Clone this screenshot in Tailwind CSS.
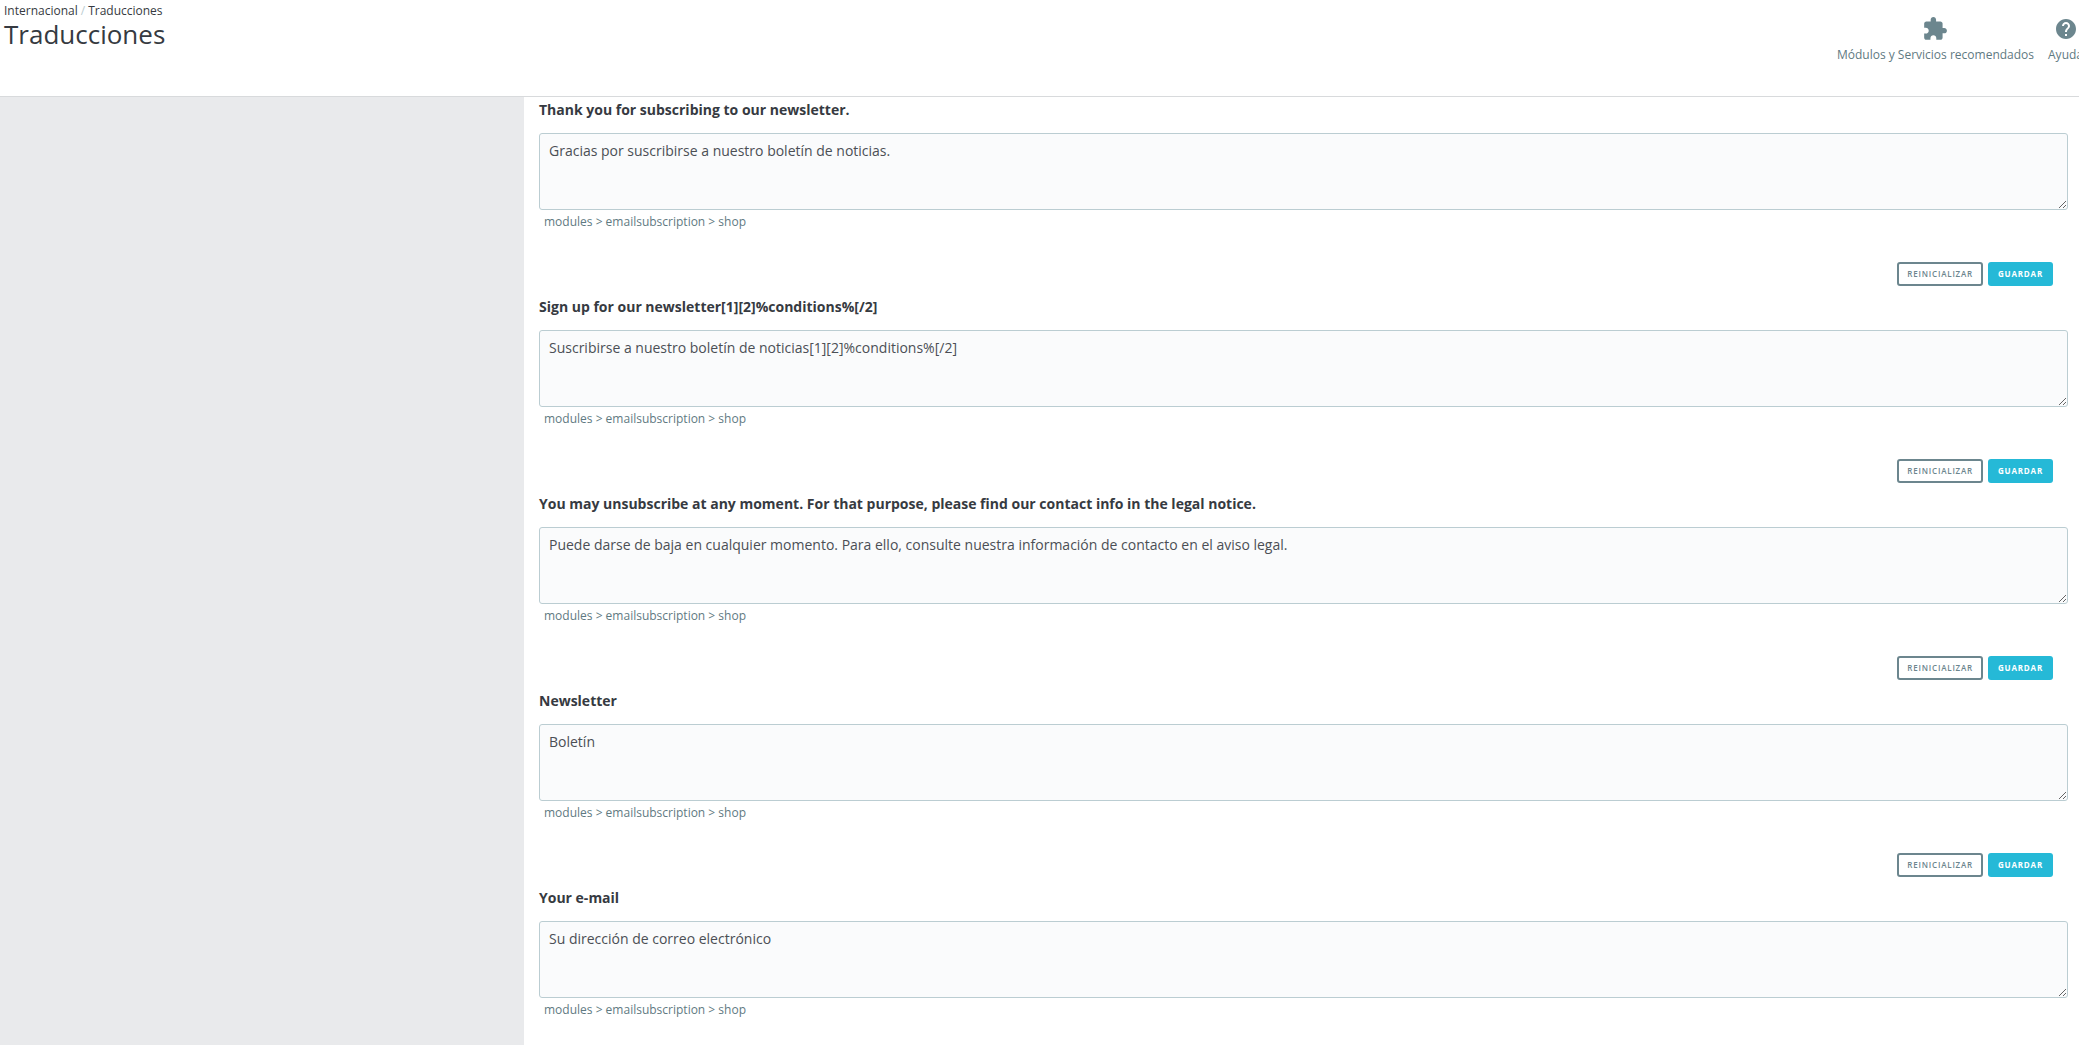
<!DOCTYPE html>
<html lang="es">
<head>
  <meta charset="UTF-8" />
  <meta name="viewport" content="width=device-width, initial-scale=1.0" />
  <title>Traducciones</title>
  <script src="https://cdn.jsdelivr.net/npm/@tailwindcss/browser@4"></script>
</head>
<body class="h-screen flex flex-col overflow-hidden bg-white text-[#363a41] font-['Open_Sans','Noto_Sans',sans-serif]">

  <!-- Cabecera -->
  <header class="h-[97px] shrink-0 flex justify-between border-b border-[#d8dadc]">
    <div class="pl-1 pt-[3px]">
      <nav aria-label="Ruta" class="flex gap-[3px] text-xs leading-4">
        <a href="#">Internacional</a>
        <span class="text-[#bbcdd2]">/</span>
        <a href="#">Traducciones</a>
      </nav>
      <h1 class="text-[26px] leading-[30px]">Traducciones</h1>
    </div>
    <div class="flex gap-[14px] pt-4 -mr-1 text-xs leading-4 text-[#5f7a82]">
      <a href="#" class="flex flex-col items-center gap-[5px]">
        <svg class="size-[26px] text-[#6c868e]" viewBox="0 0 24 24" fill="currentColor" aria-hidden="true"><path d="M20.500 11H19V7c0-1.100-.9-2-2-2h-4V3.500C13 2.120 11.880 1 10.500 1S8 2.120 8 3.500V5H4c-1.100 0-1.990.9-1.990 2v3.800H3.500c1.490 0 2.700 1.210 2.700 2.700s-1.210 2.700-2.700 2.700H2V20c0 1.100.9 2 2 2h3.800v-1.500c0-1.490 1.210-2.700 2.700-2.700 1.490 0 2.700 1.210 2.700 2.700V22H17c1.100 0 2-.9 2-2v-4h1.500c1.380 0 2.500-1.120 2.500-2.500S21.880 11 20.500 11z"/></svg>
        Módulos y Servicios recomendados
      </a>
      <a href="#" class="flex flex-col items-center gap-[5px]">
        <svg class="size-6 my-px text-[#6c868e]" viewBox="0 0 24 24" fill="currentColor" aria-hidden="true"><path d="M12 2C6.480 2 2 6.480 2 12s4.480 10 10 10 10-4.480 10-10S17.520 2 12 2zm1 17h-2v-2h2v2zm2.070-7.750l-.9.920C13.450 12.900 13 13.500 13 15h-2v-.5c0-1.100.45-2.100 1.170-2.830l1.240-1.260c.37-.36.590-.86.590-1.410 0-1.100-.9-2-2-2s-2 .9-2 2H8c0-2.210 1.790-4 4-4s4 1.790 4 4c0 .88-.36 1.680-.93 2.250z"/></svg>
        Ayuda
      </a>
    </div>
  </header>

  <div class="flex flex-1 min-h-0">
    <!-- Columna lateral -->
    <aside class="w-[524px] shrink-0 bg-[#e9eaec]"></aside>

    <!-- Lista de traducciones -->
    <main class="flex-1 min-w-0 pl-[15px] pr-[11px] pt-[3px] overflow-hidden">
      <form class="mb-[11px]">
        <label for="t1" class="block mb-[13px] text-sm leading-5 font-bold">Thank you for subscribing to our newsletter.</label>
        <textarea id="t1" class="block w-full h-[77px] px-[9px] py-[7px] resize-y rounded-[3px] border border-[#bbcdd2] bg-[#fafbfc] text-sm leading-5 text-[#4b4f55]">Gracias por suscribirse a nuestro boletín de noticias.</textarea>
        <p class="pl-[5px] pt-1 text-xs leading-4 text-[#5f7a82]">modules &gt; emailsubscription &gt; shop</p>
        <div class="flex justify-end gap-[5px] mt-8 pr-[15px] text-[8px] font-semibold tracking-widest leading-3">
          <button type="reset" class="h-6 px-2 rounded-[3px] border-2 border-[#6c868e] text-[#6c868e]">REINICIALIZAR</button>
          <button type="button" class="h-6 px-[10px] rounded-[3px] bg-[#25b9d7] text-white font-bold">GUARDAR</button>
        </div>
      </form>

      <form class="mb-[11px]">
        <label for="t2" class="block mb-[13px] text-sm leading-5 font-bold">Sign up for our newsletter[1][2]%conditions%[/2]</label>
        <textarea id="t2" class="block w-full h-[77px] px-[9px] py-[7px] resize-y rounded-[3px] border border-[#bbcdd2] bg-[#fafbfc] text-sm leading-5 text-[#4b4f55]">Suscribirse a nuestro boletín de noticias[1][2]%conditions%[/2]</textarea>
        <p class="pl-[5px] pt-1 text-xs leading-4 text-[#5f7a82]">modules &gt; emailsubscription &gt; shop</p>
        <div class="flex justify-end gap-[5px] mt-8 pr-[15px] text-[8px] font-semibold tracking-widest leading-3">
          <button type="reset" class="h-6 px-2 rounded-[3px] border-2 border-[#6c868e] text-[#6c868e]">REINICIALIZAR</button>
          <button type="button" class="h-6 px-[10px] rounded-[3px] bg-[#25b9d7] text-white font-bold">GUARDAR</button>
        </div>
      </form>

      <form class="mb-[11px]">
        <label for="t3" class="block mb-[13px] text-sm leading-5 font-bold">You may unsubscribe at any moment. For that purpose, please find our contact info in the legal notice.</label>
        <textarea id="t3" class="block w-full h-[77px] px-[9px] py-[7px] resize-y rounded-[3px] border border-[#bbcdd2] bg-[#fafbfc] text-sm leading-5 text-[#4b4f55]">Puede darse de baja en cualquier momento. Para ello, consulte nuestra información de contacto en el aviso legal.</textarea>
        <p class="pl-[5px] pt-1 text-xs leading-4 text-[#5f7a82]">modules &gt; emailsubscription &gt; shop</p>
        <div class="flex justify-end gap-[5px] mt-8 pr-[15px] text-[8px] font-semibold tracking-widest leading-3">
          <button type="reset" class="h-6 px-2 rounded-[3px] border-2 border-[#6c868e] text-[#6c868e]">REINICIALIZAR</button>
          <button type="button" class="h-6 px-[10px] rounded-[3px] bg-[#25b9d7] text-white font-bold">GUARDAR</button>
        </div>
      </form>

      <form class="mb-[11px]">
        <label for="t4" class="block mb-[13px] text-sm leading-5 font-bold">Newsletter</label>
        <textarea id="t4" class="block w-full h-[77px] px-[9px] py-[7px] resize-y rounded-[3px] border border-[#bbcdd2] bg-[#fafbfc] text-sm leading-5 text-[#4b4f55]">Boletín</textarea>
        <p class="pl-[5px] pt-1 text-xs leading-4 text-[#5f7a82]">modules &gt; emailsubscription &gt; shop</p>
        <div class="flex justify-end gap-[5px] mt-8 pr-[15px] text-[8px] font-semibold tracking-widest leading-3">
          <button type="reset" class="h-6 px-2 rounded-[3px] border-2 border-[#6c868e] text-[#6c868e]">REINICIALIZAR</button>
          <button type="button" class="h-6 px-[10px] rounded-[3px] bg-[#25b9d7] text-white font-bold">GUARDAR</button>
        </div>
      </form>

      <form>
        <label for="t5" class="block mb-[13px] text-sm leading-5 font-bold">Your e-mail</label>
        <textarea id="t5" class="block w-full h-[77px] px-[9px] py-[7px] resize-y rounded-[3px] border border-[#bbcdd2] bg-[#fafbfc] text-sm leading-5 text-[#4b4f55]">Su dirección de correo electrónico</textarea>
        <p class="pl-[5px] pt-1 text-xs leading-4 text-[#5f7a82]">modules &gt; emailsubscription &gt; shop</p>
      </form>
    </main>
  </div>

</body>
</html>
